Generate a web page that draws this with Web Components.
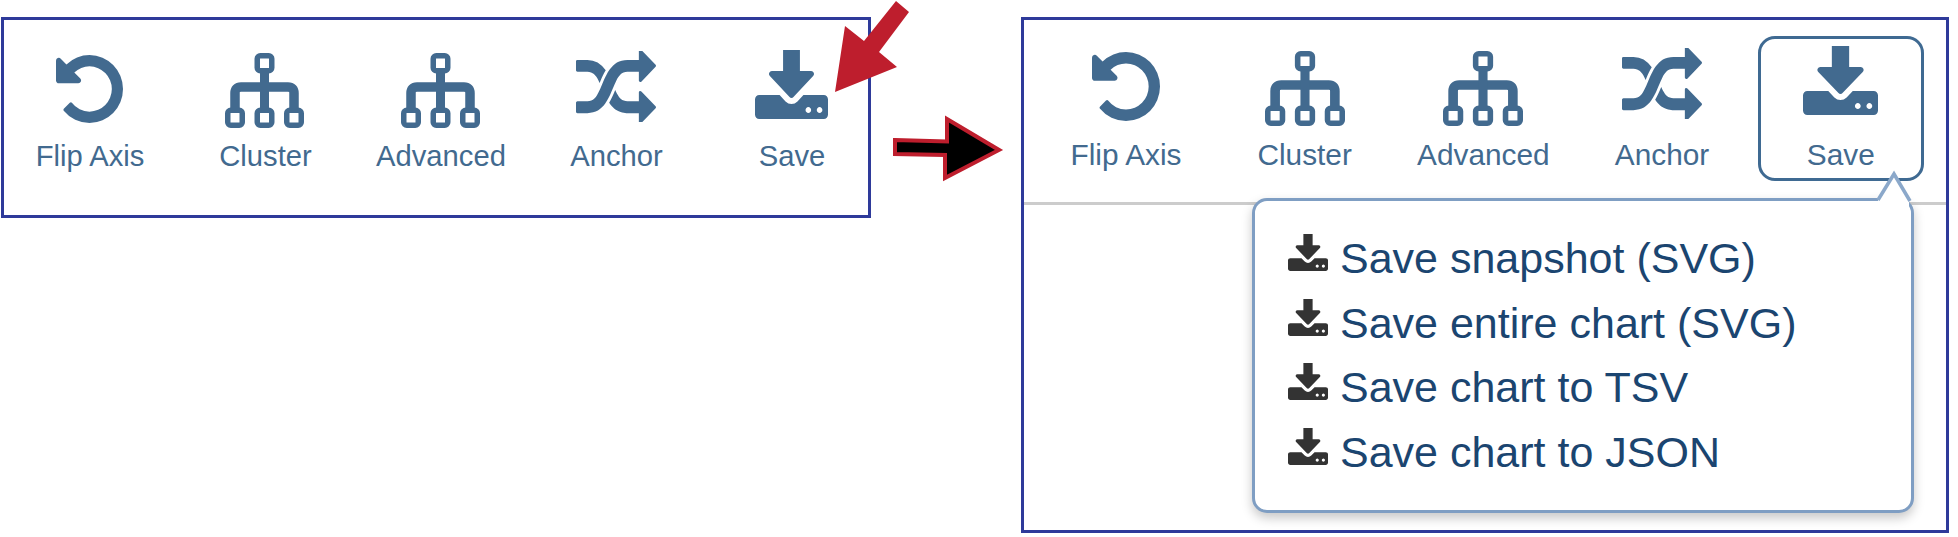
<!DOCTYPE html>
<html lang="en">
<head>
<meta charset="utf-8">
<title>Save menu</title>
<style>
html,body{margin:0;padding:0;background:#fff;}
body{font-family:"Liberation Sans",Arial,sans-serif;overflow:hidden;}
</style>
</head>
<body>
<fig-page>
  <tool-panel style="--w:870px;--h:201px;--pt:20px;--pl:3.5px;--gap:10.5px;--sep:none;--item-w:165px;--box-h:88px;--label:29.2px;--ix:-2px;">
    <tool-item label="Flip Axis"><app-icon name="undo" style="--iw:67px;--ih:68px;--it:5px"></app-icon></tool-item>
    <tool-item label="Cluster"><app-icon name="tree" style="--iw:79px;--ih:75px;--it:3px"></app-icon></tool-item>
    <tool-item label="Advanced"><app-icon name="tree" style="--iw:79px;--ih:75px;--it:3px"></app-icon></tool-item>
    <tool-item label="Anchor"><app-icon name="random" style="--iw:80px;--ih:71px;--it:1px"></app-icon></tool-item>
    <tool-item label="Save"><app-icon name="save" style="--iw:73px;--ih:69px;--it:0px"></app-icon></tool-item>
  </tool-panel>
  <tool-panel style="--w:928px;--h:516px;--pt:16px;--pl:19px;--gap:12.7px;--sep:3px solid #ccc;--item-w:166px;--box-h:91px;--label:29.8px;--ix:0px;">
    <tool-item label="Flip Axis"><app-icon name="undo" style="--iw:68px;--ih:69px;--it:6px"></app-icon></tool-item>
    <tool-item label="Cluster"><app-icon name="tree" style="--iw:80px;--ih:75px;--it:5px"></app-icon></tool-item>
    <tool-item label="Advanced"><app-icon name="tree" style="--iw:80px;--ih:75px;--it:5px"></app-icon></tool-item>
    <tool-item label="Anchor"><app-icon name="random" style="--iw:80px;--ih:71px;--it:2px"></app-icon></tool-item>
    <tool-item label="Save" active><app-icon name="save" style="--iw:75px;--ih:69px;--it:0px"></app-icon></tool-item>
    <save-menu slot="overlay">
      <menu-row>Save snapshot (SVG)</menu-row>
      <menu-row>Save entire chart (SVG)</menu-row>
      <menu-row>Save chart to TSV</menu-row>
      <menu-row>Save chart to JSON</menu-row>
    </save-menu>
  </tool-panel>
</fig-page>
<script>
const ICONS = {
  undo: `<svg viewBox="128 128 1536 1536" preserveAspectRatio="none"><path fill="currentColor" d="M1664 896q0 156-61 298t-164 245-245 164-298 61q-172 0-327-72.500t-264-204.500q-7-10-6.500-22.500t8.500-20.500l137-138q10-9 25-9 16 2 23 12 73 95 179 147t225 52q104 0 198.500-40.500t163.500-109.500 109.500-163.500 40.500-198.500-40.500-198.500-109.500-163.500-163.500-109.500-198.500-40.500q-98 0-188 35.500t-160 101.500l137 138q31 30 14 69-17 40-59 40h-448q-26 0-45-19t-19-45v-448q0-42 40-59 39-17 69 14l130 129q107-101 244.500-156.500t284.500-55.500q156 0 298 61t245 164 164 245 61 298z"/></svg>`,
  tree: `<svg viewBox="0 0 79 75" preserveAspectRatio="none"><g fill="none" stroke="currentColor"><path stroke-width="9.500" d="M10 57V40q0-6 6-6h47q6 0 6 6v17"/><path stroke-width="9" d="M39.500 18v40"/></g><g fill="#fff" stroke="currentColor" stroke-width="5.500"><rect x="32.250" y="2.750" width="14.500" height="15" rx="3"/><rect x="2.750" y="57.250" width="14.500" height="15" rx="3"/><rect x="32.250" y="57.250" width="14.500" height="15" rx="3"/><rect x="61.750" y="57.250" width="14.500" height="15" rx="3"/></g></svg>`,
  random: `<svg viewBox="0 64 1792 1536" preserveAspectRatio="none"><path fill="currentColor" d="M666 481q-60 92-137 273-22-45-37-72.500t-40.500-63.500-51-56.500-63-35-81.500-14.500h-224q-14 0-23-9t-9-23v-192q0-14 9-23t23-9h224q250 0 410 225zm1126 799q0 14-9 23l-320 320q-9 9-23 9-13 0-22.500-9.500t-9.500-22.500v-192q-32 0-85 .5t-81 1-73-1-71-5-64-10.500-63-18.500-58-28.500-59-40-55-53.500-56-69.500q59-93 136-273 22 45 37 72.500t40.500 63.500 51 56.500 63 35 81.500 14.500h256v-192q0-14 9-23t23-9q12 0 24 10l319 319q9 9 9 23zm0-896q0 14-9 23l-320 320q-9 9-23 9-13 0-22.500-9.500t-9.500-22.500v-192h-256q-48 0-87 15t-69 45-51 61.500-45 77.500q-32 62-78 171-29 66-49.500 111t-54 105-64 100-74 83-90 68.500-106.500 42-128 16.500h-224q-14 0-23-9t-9-23v-192q0-14 9-23t23-9h224q48 0 87-15t69-45 51-61.500 45-77.500q32-62 78-171 29-66 49.500-111t54-105 64-100 74-83 90-68.500 106.500-42 128-16.500h256v-192q0-14 9-23t23-9q12 0 24 10l319 319q9 9 9 23z"/></svg>`,
  save: `<svg viewBox="64 64 1664 1472" preserveAspectRatio="none"><path fill="currentColor" d="M1344 1344q0-26-19-45t-45-19-45 19-19 45 19 45 45 19 45-19 19-45zm256 0q0-26-19-45t-45-19-45 19-19 45 19 45 45 19 45-19 19-45zm128-224v320q0 40-28 68t-68 28h-1472q-40 0-68-28t-28-68v-320q0-40 28-68t68-28h465l135 136q58 56 136 56t136-56l136-136h464q40 0 68 28t28 68zm-325-569q17 41-14 70l-448 448q-18 19-45 19t-45-19l-448-448q-31-29-14-70 17-39 59-39h256v-448q0-26 19-45t45-19h256q26 0 45 19t19 45v448h256q42 0 59 39z"/></svg>`
};

class FigPage extends HTMLElement {
  constructor(){
    super();
    this.attachShadow({mode:'open'}).innerHTML = `
      <style>
        :host{display:flex;position:relative;gap:150px;padding:17px 0 0 1px;width:1957px;height:520px;font-family:"Liberation Sans",Arial,sans-serif;}
        svg{position:absolute;left:0;top:0;pointer-events:none;}
      </style>
      <slot></slot>
      <svg width="1958" height="537" viewBox="0 0 1958 537" aria-hidden="true">
        <polygon fill="#be1e2d" points="896,1 909,12 879,52 897,67 835,92 845,26 864,41"/>
        <polygon fill="#000" stroke="#be1e2d" stroke-width="4" points="895,140 947,141.500 947,119 999,150 945,178 945,155 895,154"/>
      </svg>`;
  }
}

class ToolPanel extends HTMLElement {
  constructor(){
    super();
    this.attachShadow({mode:'open'}).innerHTML = `
      <style>
        :host{display:block;position:relative;box-sizing:border-box;flex:none;width:var(--w);height:var(--h);border:3px solid #2e3a9a;background:#fff;}
        .bar{display:flex;gap:var(--gap);box-sizing:border-box;height:185px;padding:var(--pt) 0 0 var(--pl);border-bottom:var(--sep);}
      </style>
      <div class="bar"><slot></slot></div>
      <slot name="overlay"></slot>`;
  }
}

class ToolItem extends HTMLElement {
  constructor(){
    super();
    this.attachShadow({mode:'open'}).innerHTML = `
      <style>
        :host{display:flex;flex-direction:column;align-items:center;box-sizing:border-box;flex:none;width:var(--item-w);height:145px;padding-top:7px;border:3px solid transparent;border-radius:17px;color:#426a8f;}
        :host([active]){border-color:#3f6a92;}
        .box{display:flex;justify-content:center;align-items:flex-start;width:100%;height:var(--box-h);padding-right:calc(0px - var(--ix));box-sizing:border-box;}
        .label{font-size:var(--label);line-height:36px;white-space:nowrap;}
      </style>
      <div class="box"><slot></slot></div>
      <div class="label"></div>`;
  }
  connectedCallback(){this.shadowRoot.querySelector('.label').textContent=this.getAttribute('label');}
}

class AppIcon extends HTMLElement {
  constructor(){
    super();
    this.attachShadow({mode:'open'});
  }
  connectedCallback(){
    this.shadowRoot.innerHTML = `
      <style>
        :host{display:block;flex:none;width:var(--iw);height:var(--ih);margin-top:var(--it,0);}
        svg{display:block;width:100%;height:100%;}
      </style>${ICONS[this.getAttribute('name')]}`;
  }
}

class SaveMenu extends HTMLElement {
  constructor(){
    super();
    this.attachShadow({mode:'open'}).innerHTML = `
      <style>
        :host{display:block;position:absolute;left:228px;top:178px;box-sizing:border-box;width:662px;height:315px;padding:25px 0 0 33px;background:#fff;border:3px solid #7f9ec3;border-radius:15px;box-shadow:0 5px 11px rgba(0,0,0,.22);}
        svg{position:absolute;left:622px;top:-29px;overflow:visible;}
      </style>
      <svg width="34" height="34" viewBox="0 0 34 34" aria-hidden="true">
        <path d="M1 28 L17 2 L32 28 L32 34 L1 34 Z" fill="#fff" stroke="none"/>
        <path d="M1 28 L17 2 L33 29" fill="none" stroke="#8ba8ca" stroke-width="3.500"/>
      </svg>
      <slot></slot>`;
  }
}

class MenuRow extends HTMLElement {
  constructor(){
    super();
    this.attachShadow({mode:'open'}).innerHTML = `
      <style>
        :host{display:flex;align-items:flex-start;gap:12px;height:64.500px;font-size:43px;line-height:64.500px;color:#1b4570;white-space:nowrap;}
        app-icon{color:#333;margin-top:8px;--iw:40px;--ih:37px;}
      </style>
      <app-icon name="save"></app-icon><span><slot></slot></span>`;
  }
}

customElements.define('app-icon', AppIcon);
customElements.define('tool-item', ToolItem);
customElements.define('menu-row', MenuRow);
customElements.define('save-menu', SaveMenu);
customElements.define('tool-panel', ToolPanel);
customElements.define('fig-page', FigPage);
</script>
</body>
</html>
